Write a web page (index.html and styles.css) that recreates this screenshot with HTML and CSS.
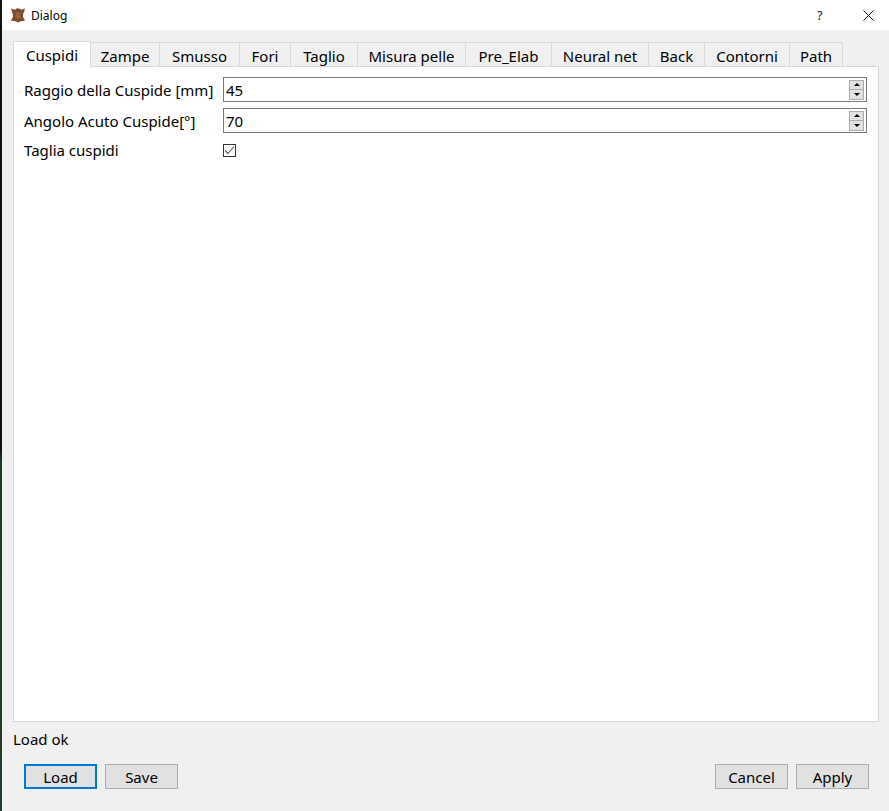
FILE: index.html
```html
<!DOCTYPE html>
<html lang="en">
<head>
  <meta charset="UTF-8">
  <meta name="viewport" content="width=device-width, initial-scale=1">
  <title>Dialog</title>
  <link rel="stylesheet" href="styles.css">
</head>
<body>

  <div class="desktop-edge"></div>

  <div class="dialog">
    <div class="titlebar">
      <svg class="app-icon" width="16" height="16" viewBox="0 0 16 16">
        <path d="M1 1.5 L4 2.5 Q5.5 3 6.5 1.5 L9.5 1.5 Q10.5 3 12 2.5 L15 1.5 L14 5 Q12.5 7 13 10 L15 13.500 L12 14 Q10 14 8 15.500 Q6 14 4 14 L1 13.500 L3 10 Q3.500 7 2 5 Z" fill="#7a4a2c"/>
        <path d="M6 5 L10 5 L11 10 L8 13 L5 10 Z" fill="#94603c"/>
      </svg>
      <span class="title">Dialog</span>
      <span class="help-btn">?</span>
      <svg class="close-btn" width="11" height="11" viewBox="0 0 11 11">
        <path d="M0.500 0.500 L10.500 10.500 M10.500 0.500 L0.500 10.500" stroke="#111" stroke-width="1" fill="none"/>
      </svg>
    </div>

    <div class="content">
      <div class="tabs">
        <div class="tab active w-cuspidi">Cuspidi</div>
        <div class="tab w-zampe">Zampe</div>
        <div class="tab w-smusso">Smusso</div>
        <div class="tab w-fori">Fori</div>
        <div class="tab w-taglio">Taglio</div>
        <div class="tab w-misura">Misura pelle</div>
        <div class="tab w-pre">Pre_Elab</div>
        <div class="tab w-neural">Neural net</div>
        <div class="tab w-back">Back</div>
        <div class="tab w-contorni">Contorni</div>
        <div class="tab w-path">Path</div>
      </div>

      <div class="panel">
        <div class="form-row">
          <label class="field-label">Raggio della Cuspide [mm]</label>
          <div class="spinbox">
            <span class="spin-value">45</span>
            <div class="spin-buttons">
              <span class="spin-btn"><i class="arrow-up"></i></span>
              <span class="spin-btn"><i class="arrow-down"></i></span>
            </div>
          </div>
        </div>
        <div class="form-row">
          <label class="field-label">Angolo Acuto Cuspide[°]</label>
          <div class="spinbox">
            <span class="spin-value">70</span>
            <div class="spin-buttons">
              <span class="spin-btn"><i class="arrow-up"></i></span>
              <span class="spin-btn"><i class="arrow-down"></i></span>
            </div>
          </div>
        </div>
        <div class="check-row">
          <label class="field-label">Taglia cuspidi</label>
          <span class="checkbox">
            <svg width="11" height="11" viewBox="0 0 11 11">
              <path d="M1 5.500 L4 8.500 L10 1.500" stroke="#555" stroke-width="1.100" fill="none"/>
            </svg>
          </span>
        </div>
      </div>

      <div class="status">Load ok</div>

      <div class="button-bar">
        <button class="btn focused">Load</button>
        <button class="btn">Save</button>
        <div class="spacer"></div>
        <button class="btn">Cancel</button>
        <button class="btn">Apply</button>
      </div>
    </div>
  </div>

</body>
</html>
```

FILE: styles.css
```css
html, body {
  margin: 0;
  padding: 0;
  height: 100%;
}

body {
  display: flex;
  overflow: hidden;
  font-family: "Noto Sans", "Open Sans", sans-serif;
  font-size: 15px;
  color: #000;
  background: #f0f0f0;
}

.desktop-edge {
  width: 2px;
  flex-shrink: 0;
  background: linear-gradient(#111 0, #111 450px, #1d3a22 460px, #24402a 100%);
}

.dialog {
  flex: 1;
  display: flex;
  flex-direction: column;
  min-width: 0;
}

/* title bar */
.titlebar {
  height: 30px;
  flex-shrink: 0;
  display: flex;
  align-items: center;
  background: #fff;
  padding-left: 8px;
}

.app-icon {
  margin-right: 5px;
}

.title {
  font-size: 12px;
  flex: 1;
}

.help-btn {
  font-size: 13px;
  width: 14px;
  margin-right: 32px;
  color: #222;
}

.close-btn {
  margin-right: 15px;
}

/* main area */
.content {
  flex: 1;
  display: flex;
  flex-direction: column;
  padding: 11px 11px 0;
  min-height: 0;
}

.tabs {
  display: flex;
  height: 26px;
  align-items: flex-end;
  position: relative;
  z-index: 1;
  margin-bottom: -1px;
}

.tab {
  box-sizing: border-box;
  height: 25px;
  border: 1px solid #d9d9d9;
  border-left: none;
  border-bottom: 1px solid #d9d9d9;
  text-align: center;
  line-height: 26px;
  color: #000;
  white-space: nowrap;
}

.tab.active {
  height: 27px;
  background: #fff;
  border-left: 1px solid #d9d9d9;
  border-bottom: none;
  margin-bottom: -1px;
  line-height: 27px;
}

.w-cuspidi { width: 78px; }
.w-zampe { width: 69px; }
.w-smusso { width: 80px; }
.w-fori { width: 51px; }
.w-taglio { width: 67px; }
.w-misura { width: 108px; }
.w-pre { width: 86px; }
.w-neural { width: 97px; }
.w-back { width: 56px; }
.w-contorni { width: 85px; }
.w-path { width: 53px; }

.panel {
  flex: 1;
  background: #fff;
  border: 1px solid #d9d9d9;
  margin-right: -1px;
  padding: 10px 10px 0;
  min-height: 0;
}

.form-row {
  display: flex;
  align-items: center;
  height: 25px;
  margin-bottom: 6px;
}

.check-row {
  display: flex;
  height: 25px;
}

.field-label {
  width: 199px;
  flex-shrink: 0;
  white-space: nowrap;
}

.check-row .field-label {
  line-height: 22px;
}

.spinbox {
  box-sizing: border-box;
  width: 644px;
  height: 25px;
  border: 1px solid #7a7a7a;
  display: flex;
  align-items: center;
  justify-content: space-between;
  padding: 0 2px;
  font-size: 15px;
}

.spin-buttons {
  display: flex;
  flex-direction: column;
  width: 15px;
  height: 20px;
  border: 1px solid #adadad;
  box-sizing: border-box;
}

.spin-btn {
  flex: 1;
  display: flex;
  align-items: center;
  justify-content: center;
  background: #e1e1e1;
}

.spin-btn + .spin-btn {
  border-top: 1px solid #adadad;
}

.arrow-up {
  width: 0;
  height: 0;
  border-left: 3px solid transparent;
  border-right: 3px solid transparent;
  border-bottom: 3px solid #000;
}

.arrow-down {
  width: 0;
  height: 0;
  border-left: 3px solid transparent;
  border-right: 3px solid transparent;
  border-top: 3px solid #000;
}

.checkbox {
  box-sizing: border-box;
  width: 13px;
  height: 13px;
  margin-top: 5px;
  border: 1px solid #333;
  display: flex;
  align-items: center;
  justify-content: center;
  background: #fff;
}

/* bottom */
.status {
  height: 42px;
  line-height: 34px;
}

.button-bar {
  display: flex;
  gap: 8px;
  padding: 0 9px 0 11px;
  height: 47px;
  flex-shrink: 0;
}

.spacer {
  flex: 1;
}

.btn {
  box-sizing: border-box;
  width: 73px;
  height: 25px;
  padding: 0;
  border: 1px solid #adadad;
  background: #e1e1e1;
  font: inherit;
  color: #000;
}

.btn.focused {
  border: 2px solid #0078d7;
}
```
